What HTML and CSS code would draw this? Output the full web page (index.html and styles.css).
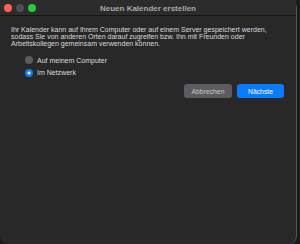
FILE: index.html
```html
<!DOCTYPE html>
<html lang="de">
<head>
<meta charset="utf-8">
<link rel="stylesheet" href="styles.css">
</head>
<body>
<div class="window">
  <div class="titlebar">
    <div class="lights">
      <span class="light red"></span>
      <span class="light gray"></span>
      <span class="light green"></span>
    </div>
    <div class="title">Neuen Kalender erstellen</div>
  </div>
  <div class="content">
    <p class="desc">Ihr Kalender kann auf Ihrem Computer oder auf einem Server gespeichert werden, sodass Sie von anderen Orten darauf zugreifen bzw. Ihn mit Freunden oder Arbeitskollegen gemeinsam verwenden können.</p>
    <div class="options">
      <label class="option"><span class="radio"></span>Auf meinem Computer</label>
      <label class="option"><span class="radio on"></span>Im Netzwerk</label>
    </div>
    <div class="actions">
      <button class="btn secondary">Abbrechen</button>
      <button class="btn primary">Nächste</button>
    </div>
  </div>
</div>
</body>
</html>
```
FILE: styles.css
```css
html, body {
  margin: 0;
  padding: 0;
  background: #1a1a1a;
}
body {
  width: 300px;
  height: 244px;
  overflow: hidden;
  font-family: "Liberation Sans", Arial, sans-serif;
}
.window {
  width: 297px;
  height: 244px;
  box-sizing: border-box;
  background: #282828;
  border-radius: 0 8px 8px 8px;
  border-right: 1px solid #555;
  display: flex;
  flex-direction: column;
}
.titlebar {
  height: 16px;
  box-sizing: border-box;
  border-bottom: 1px solid #151515;
  background: #2c2c2c;
  position: relative;
  display: flex;
  align-items: center;
  justify-content: center;
}
.lights {
  position: absolute;
  left: 4px;
  top: 4px;
  display: flex;
  gap: 4px;
}
.light {
  width: 8px;
  height: 8px;
  border-radius: 50%;
}
.red { background: #fe5f57; }
.gray { background: #4f4f4f; }
.green { background: #28c840; }
.title {
  color: #a8a8a8;
  font-size: 8px;
  font-weight: bold;
  margin-top: 1px;
}
.content {
  padding: 10px 11px 0 11px;
  display: flex;
  flex-direction: column;
}
.desc {
  margin: 0;
  color: #dadada;
  font-size: 7px;
  line-height: 7px;
  width: 264px;
}
.options {
  margin-top: 9px;
  padding-left: 14px;
  display: flex;
  flex-direction: column;
  gap: 4.5px;
}
.option {
  display: flex;
  align-items: center;
  gap: 4px;
  color: #dcdcdc;
  font-size: 7px;
  height: 8px;
}
.radio {
  width: 8px;
  height: 8px;
  border-radius: 50%;
  background: #5c5c5c;
  box-sizing: border-box;
}
.radio.on {
  background: radial-gradient(circle, #fff 0 1.4px, #0a7aff 1.7px);
}
.actions {
  margin-top: 7.5px;
  display: flex;
  justify-content: flex-end;
  gap: 5px;
  padding-right: 1px;
}
.btn {
  height: 14px;
  border: none;
  border-radius: 3px;
  font-family: "Liberation Sans", Arial, sans-serif;
  font-size: 6.8px;
  padding: 0;
  color: #d8d8d8;
}
.secondary {
  width: 48px;
  background: #5b5b60;
  color: #c8c8c8;
}
.primary {
  width: 47px;
  background: #0a7aff;
  color: #fff;
}
```
